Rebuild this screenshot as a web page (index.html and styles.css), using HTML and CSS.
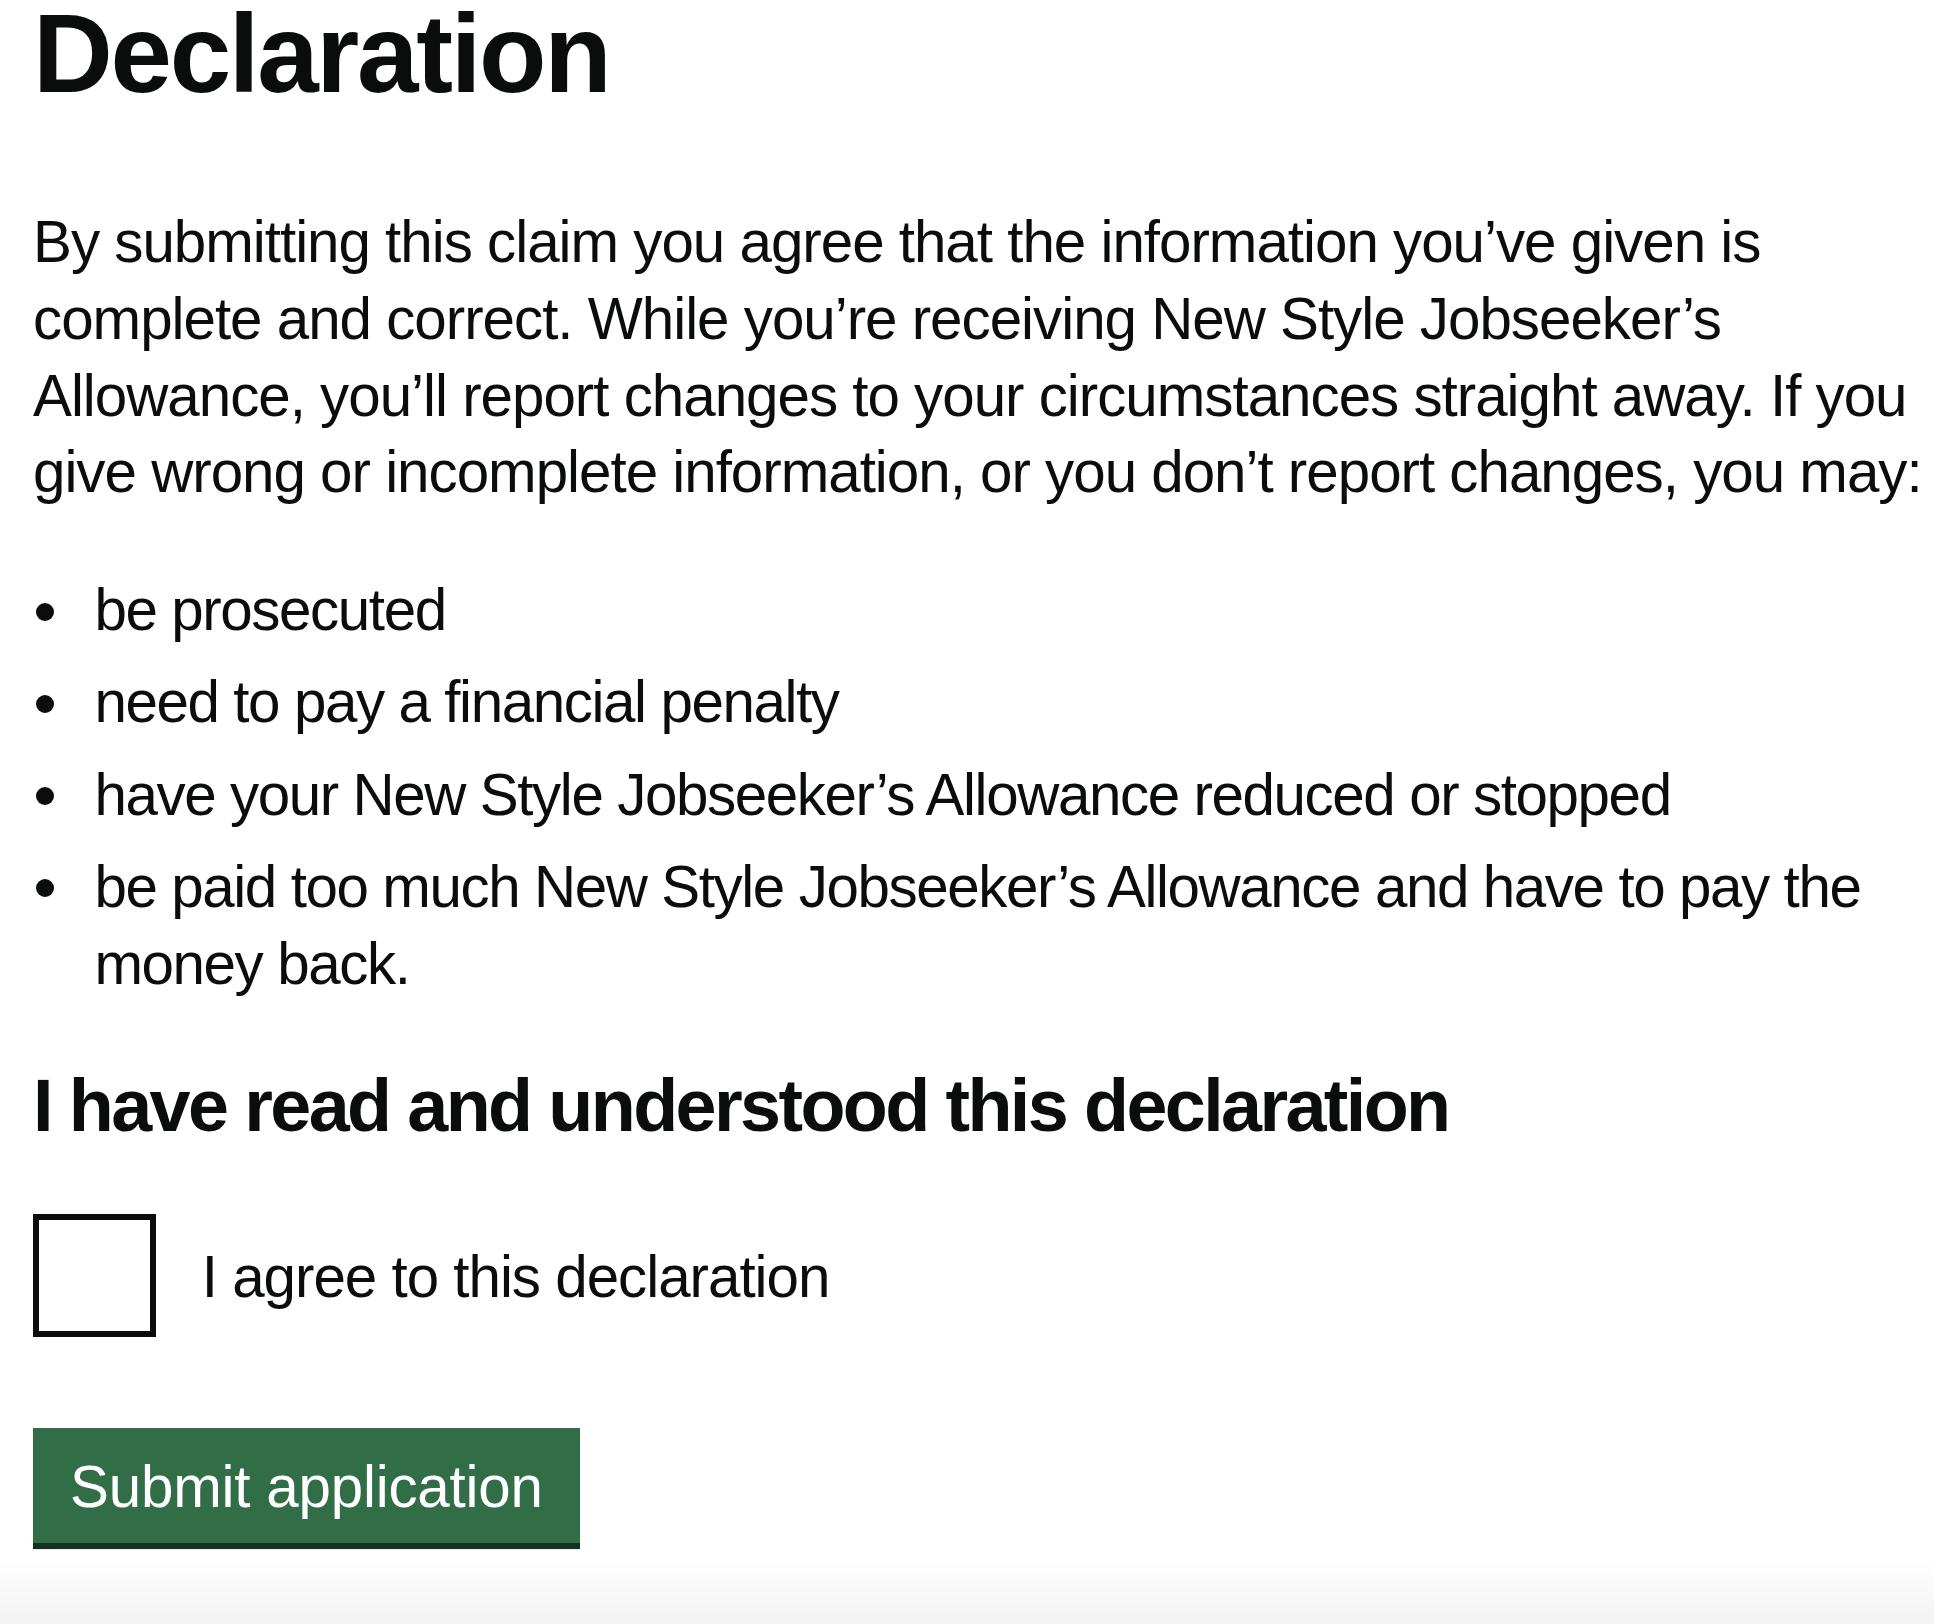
FILE: index.html
```html
<!DOCTYPE html>
<html lang="en">
<head>
    <meta charset="UTF-8">
    <meta name="viewport" content="width=device-width, initial-scale=1.0">
    <title>Declaration - New Style Jobseeker's Allowance</title>
    <link rel="stylesheet" href="styles.css">
</head>
<body>
    <main class="page">
        <h1 class="heading-l">Declaration</h1>

        <p class="body-text">By submitting this claim you agree that the information you’ve given is complete and correct. While you’re receiving New Style Jobseeker’s Allowance, you’ll report changes to your circumstances straight away. If you give wrong or incomplete information, or you don’t report changes, you may:</p>

        <ul class="bullets">
            <li>be prosecuted</li>
            <li>need to pay a financial penalty</li>
            <li>have your New Style Jobseeker’s Allowance reduced or stopped</li>
            <li>be paid too much New Style Jobseeker’s Allowance and have to pay the money back.</li>
        </ul>

        <form class="declaration-form" action="#" method="post">
            <fieldset class="fieldset">
                <legend class="legend">
                    <h2 class="legend-heading">I have read and understood this declaration</h2>
                </legend>
                <div class="checkbox-item">
                    <input class="checkbox-input" id="agree" name="agree" type="checkbox">
                    <label class="checkbox-label" for="agree">I agree to this declaration</label>
                </div>
            </fieldset>

            <button class="button" type="submit">Submit application</button>
        </form>
    </main>
    <div class="page-end"></div>
</body>
</html>
```

FILE: styles.css
```css
html, body {
    margin: 0;
    padding: 0;
    background: #ffffff;
    color: #0b0c0c;
    font-family: "Liberation Sans", Arial, sans-serif;
}

body {
    padding-left: 33px;
    overflow: hidden;
}

.page {
    display: flex;
    flex-direction: column;
    align-items: flex-start;
}

.heading-l {
    margin: 0 0 97px;
    font-size: 110.5px;
    line-height: 107px;
    font-weight: 700;
    letter-spacing: -2.3px;
}

.body-text {
    margin: 0 0 61px;
    font-size: 58.3px;
    line-height: 76.8px;
    letter-spacing: -1px;
}

.bullets {
    list-style: none;
    margin: 0 0 57.7px;
    padding: 0;
    font-size: 58.3px;
    line-height: 76.8px;
    letter-spacing: -1.4px;
}

.bullets li {
    display: flex;
    margin-bottom: 15.4px;
}

.bullets li:last-child {
    margin-bottom: 0;
}

.bullets li::before {
    content: "";
    flex: none;
    width: 18px;
    height: 18px;
    margin: 30.7px 40.4px 0 3px;
    border-radius: 50%;
    background: #0b0c0c;
}

.declaration-form {
    display: flex;
    flex-direction: column;
    align-items: flex-start;
}

.fieldset {
    margin: 0 0 91.2px;
    padding: 0;
    border: 0;
    min-width: 0;
}

.legend {
    display: table;
    padding: 0;
    margin-bottom: 61.8px;
}

.legend-heading {
    margin: 0;
    font-size: 73.7px;
    line-height: 92.1px;
    font-weight: 700;
    letter-spacing: -2.6px;
}

.checkbox-item {
    display: flex;
    align-items: flex-start;
}

.checkbox-input {
    appearance: none;
    -webkit-appearance: none;
    flex: none;
    box-sizing: border-box;
    width: 122.8px;
    height: 122.8px;
    margin: 0;
    border: 6.1px solid #0b0c0c;
    border-radius: 0;
    background: #ffffff;
    cursor: pointer;
}

.checkbox-label {
    padding: 24.6px 46px 15.4px;
    font-size: 58.3px;
    line-height: 76.8px;
    letter-spacing: -1px;
    cursor: pointer;
}

.button {
    margin: 0;
    padding: 29.7px 37px 27px;
    border: none;
    border-radius: 0;
    background-color: #316e47;
    box-shadow: 0 6.1px 0 #15301f;
    color: #ffffff;
    font-family: "Liberation Sans", Arial, sans-serif;
    font-size: 58.3px;
    line-height: 58.3px;
    letter-spacing: -0.2px;
    cursor: pointer;
}

.button:hover {
    background-color: #285c3b;
}

.page-end {
    margin-top: 17px;
    height: 80px;
    margin-left: -33px;
    background: linear-gradient(#ffffff, #f3f3f3 75%);
}
```
